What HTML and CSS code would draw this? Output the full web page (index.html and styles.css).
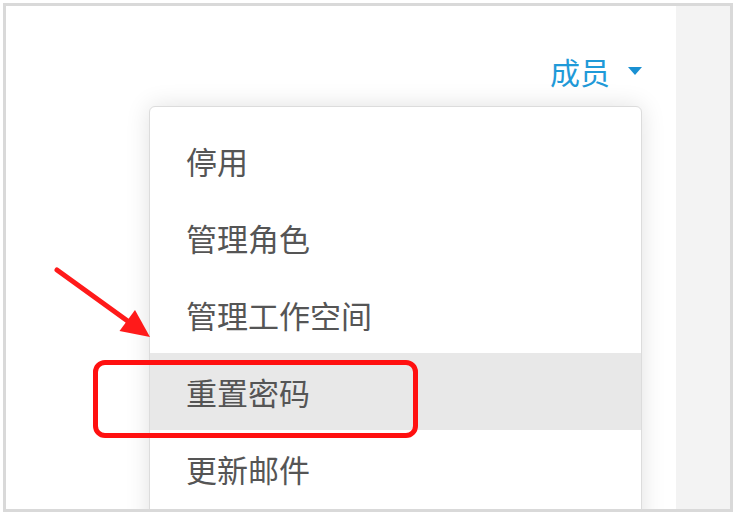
FILE: index.html
```html
<!DOCTYPE html>
<html lang="zh-CN">
<head>
  <meta charset="UTF-8" />
  <title>成员</title>
  <link rel="stylesheet" href="styles.css">
</head>
<body>

<div class="frame">
  <div class="main">
    <div class="toolbar">
      <span class="member-toggle">成员</span>
      <span class="caret"></span>
    </div>

    <ul class="menu">
      <li>停用</li>
      <li>管理角色</li>
      <li>管理工作空间</li>
      <li class="hover">重置密码</li>
      <li>更新邮件</li>
    </ul>
  </div>
  <div class="side"></div>

  <!-- annotation over the screenshot -->
  <svg class="arrow" width="200" height="400" viewBox="0 0 200 400">
    <line x1="51" y1="264" x2="123" y2="316" stroke="#ff1a1a" stroke-width="5" stroke-linecap="round"/>
    <polygon points="144,331 113.5,325 129,304" fill="#ff1a1a"/>
  </svg>
  <div class="highlight-box"></div>
</div>

</body>
</html>
```

FILE: styles.css
```css
* {
  box-sizing: border-box;
}

body {
  margin: 0;
  background: #fff;
  font-family: "Noto Sans CJK SC", "Noto Sans", sans-serif;
}

.frame {
  position: relative;
  margin: 3px;
  width: 730px;
  height: 509px;
  border: 3px solid #d9d9d9;
  display: flex;
  overflow: hidden;
}

.main {
  flex: 1;
  display: flex;
  flex-direction: column;
}

.side {
  width: 54px;
  background: #f3f3f3;
}

.toolbar {
  display: flex;
  justify-content: flex-end;
  align-items: center;
  padding: 45px 34px 0 0;
  height: 85px;
}

.member-toggle {
  font-size: 30px;
  line-height: 40px;
  color: #1f9ad8;
}

.caret {
  margin-left: 18px;
  width: 0;
  height: 0;
  border-left: 7.5px solid transparent;
  border-right: 7.5px solid transparent;
  border-top: 8px solid #1a90d2;
}

.menu {
  list-style: none;
  margin: 15px 34px 0 143px;
  padding: 15px 0 30px;
  background: #fff;
  border: 1px solid #dcdcdc;
  border-radius: 6px;
  box-shadow: 0 0 24px rgba(0, 0, 0, 0.12);
}

.menu li {
  height: 77px;
  display: flex;
  align-items: center;
  padding-left: 36px;
  font-size: 31px;
  color: #555;
}

.menu li.hover {
  background: #e8e8e8;
}

.arrow {
  position: absolute;
  left: 0;
  top: 0;
}

.highlight-box {
  position: absolute;
  left: 87px;
  top: 354px;
  width: 325px;
  height: 78px;
  border: 5px solid #ff1010;
  border-radius: 12px;
}
```
